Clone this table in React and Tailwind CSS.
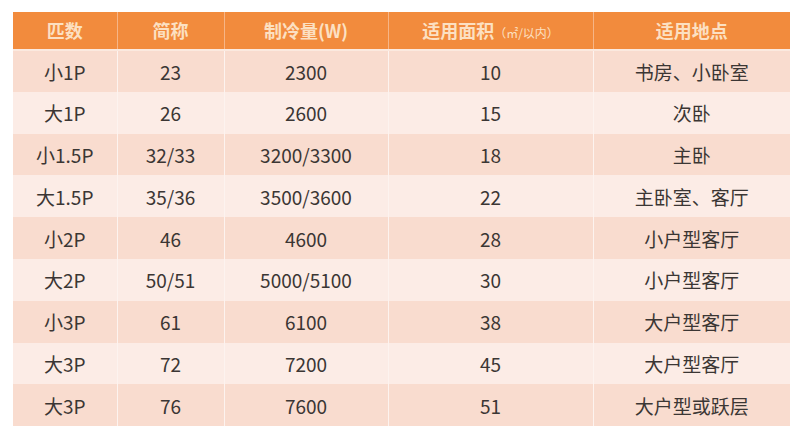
import React from 'react';

const rows = [
  ['小1P', '23', '2300', '10', '书房、小卧室'],
  ['大1P', '26', '2600', '15', '次卧'],
  ['小1.5P', '32/33', '3200/3300', '18', '主卧'],
  ['大1.5P', '35/36', '3500/3600', '22', '主卧室、客厅'],
  ['小2P', '46', '4600', '28', '小户型客厅'],
  ['大2P', '50/51', '5000/5100', '30', '小户型客厅'],
  ['小3P', '61', '6100', '38', '大户型客厅'],
  ['大3P', '72', '7200', '45', '大户型客厅'],
  ['大3P', '76', '7600', '51', '大户型或跃层'],
];

const widths = ['w-[104px]', 'w-[107px]', 'w-[164px]', 'w-[205px]', 'w-[197px]'];

export default function App() {
  return (
    <div
      className="w-[800px] h-[437px] bg-white pt-[12px] pl-[13px]"
      style={{ fontFamily: '"Microsoft YaHei", "Noto Sans CJK SC", "Noto Sans", sans-serif' }}
    >
      <table className="border-collapse table-fixed w-[777px]">
        <thead>
          <tr className="bg-[#f28b3d] h-[38px] border-b-2 border-[#fbe9df]">
            <th className={`${widths[0]} border-r border-[#f6b587] text-[18px] font-bold text-[#fce0c2]`}>匹数</th>
            <th className={`${widths[1]} border-r border-[#f6b587] text-[18px] font-bold text-[#fce0c2]`}>简称</th>
            <th className={`${widths[2]} border-r border-[#f6b587] text-[18px] font-bold text-[#fce0c2]`}>制冷量(W)</th>
            <th className={`${widths[3]} border-r border-[#f6b587] text-[18px] font-bold text-[#fce0c2]`}>
              适用面积<span className="text-[12px] font-normal">（㎡/以内）</span>
            </th>
            <th className={`${widths[4]} text-[18px] font-bold text-[#fce0c2]`}>适用地点</th>
          </tr>
        </thead>
        <tbody>
          {rows.map((row, i) => (
            <tr key={i} className={`h-[41.8px] ${i % 2 === 0 ? 'bg-[#f9dccf]' : 'bg-[#fcece6]'}`}>
              {row.map((cell, j) => (
                <td
                  key={j}
                  className={`text-center text-[19px] text-[#3b3634] leading-none ${j < 4 ? 'border-r border-[#fdf3ef]' : ''}`}
                >
                  {cell}
                </td>
              ))}
            </tr>
          ))}
        </tbody>
      </table>
    </div>
  );
}
